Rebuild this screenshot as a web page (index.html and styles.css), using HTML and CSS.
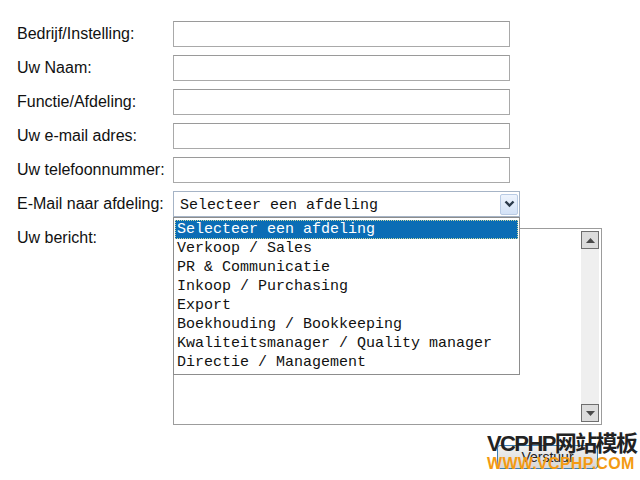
FILE: index.html
```html
<!DOCTYPE html>
<html lang="nl">
  <head>
    <meta charset="UTF-8" />
    <title>Contact</title>
    <link rel="stylesheet" href="styles.css">
  </head>
  <body>
    <form class="contact">
      <label class="lbl">Bedrijf/Instelling:</label>
      <input class="field" type="text" />
      <label class="lbl">Uw Naam:</label>
      <input class="field" type="text" />
      <label class="lbl">Functie/Afdeling:</label>
      <input class="field" type="text" />
      <label class="lbl">Uw e-mail adres:</label>
      <input class="field" type="text" />
      <label class="lbl">Uw telefoonnummer:</label>
      <input class="field" type="text" />
      <label class="lbl">E-Mail naar afdeling:</label>
      <div class="select">
        <span class="select-value">Selecteer een afdeling</span>
        <span class="select-arrow">
          <svg width="11" height="8" viewBox="0 0 11 8"><path d="M1.5 1.5 L5.5 5.5 L9.5 1.5" fill="none" stroke="#2b3a4a" stroke-width="2.4"/></svg>
        </span>
        <ul class="options">
          <li class="active">Selecteer een afdeling</li>
          <li>Verkoop / Sales</li>
          <li>PR &amp; Communicatie</li>
          <li>Inkoop / Purchasing</li>
          <li>Export</li>
          <li>Boekhouding / Bookkeeping</li>
          <li>Kwaliteitsmanager / Quality manager</li>
          <li>Directie / Management</li>
        </ul>
      </div>
      <label class="lbl lbl-top">Uw bericht:</label>
      <div class="message">
        <div class="message-text"></div>
        <div class="scrollbar">
          <span class="sb-btn">
            <svg width="9" height="5" viewBox="0 0 9 5"><path d="M0 5 L4.5 0 L9 5 Z" fill="#4a4a4a"/></svg>
          </span>
          <span class="sb-track"></span>
          <span class="sb-btn">
            <svg width="9" height="5" viewBox="0 0 9 5"><path d="M0 0 L4.5 5 L9 0 Z" fill="#4a4a4a"/></svg>
          </span>
        </div>
      </div>
      <span></span>
      <div class="actions">
        <button class="send" type="button">Verstuur</button>
        <div class="mark">
          <div class="mark-top">VCPHP网站模板</div>
          <div class="mark-url">WWW.VCPHP.COM</div>
        </div>
      </div>
    </form>
  </body>
</html>
```

FILE: styles.css
```css
body {
  margin: 0;
  padding: 21px 0 0 17px;
  background: #fff;
  font-family: "Liberation Sans", Arial, sans-serif;
  font-size: 16px;
  color: #111;
}

.contact {
  display: grid;
  grid-template-columns: 156px auto;
  row-gap: 8px;
  align-items: center;
  justify-items: start;
}

.lbl {
  line-height: 20px;
  white-space: nowrap;
}

.lbl-top {
  align-self: start;
  margin-top: 3px;
}

.field {
  box-sizing: border-box;
  width: 337px;
  height: 26px;
  margin: 0;
  border: 1px solid #a9a9a9;
  border-top-color: #9a9a9a;
  background: #fff;
}

.select {
  position: relative;
  box-sizing: border-box;
  width: 347px;
  height: 26px;
  border: 1px solid #a6b4c6;
  display: flex;
  align-items: center;
  justify-content: space-between;
  padding: 0 1px 0 6px;
  font-family: "Liberation Mono", "Courier New", monospace;
  font-size: 15px;
  z-index: 2;
}

.select-value {
  padding-top: 2px;
}

.select-arrow {
  width: 18px;
  height: 21px;
  box-sizing: border-box;
  border: 1px solid #b9cbe4;
  border-radius: 2px;
  background: linear-gradient(#eef4fd, #d3e2f7);
  display: flex;
  align-items: center;
  justify-content: center;
}

.options {
  position: absolute;
  left: -1px;
  top: 25px;
  width: 347px;
  box-sizing: border-box;
  margin: 0;
  padding: 2px 1px 2px;
  list-style: none;
  background: #fff;
  border: 1px solid #8d8d8d;
}

.options li {
  height: 19px;
  line-height: 20px;
  padding-left: 2px;
  white-space: nowrap;
}

.options li.active {
  background: #0b6db5;
  color: #fff;
  outline: 1px dotted #c9d9a0;
  outline-offset: -1px;
}

.message {
  box-sizing: border-box;
  width: 429px;
  height: 197px;
  margin-top: 3px;
  border: 1px solid #9c9c9c;
  display: flex;
}

.message-text {
  flex: 1;
}

.scrollbar {
  width: 18px;
  margin: 2px 2px 2px 0;
  display: flex;
  flex-direction: column;
  background: #efefef;
}

.sb-btn {
  height: 18px;
  box-sizing: border-box;
  border: 1px solid #6e6e6e;
  background: #dcdcdc;
  display: flex;
  align-items: center;
  justify-content: center;
}

.sb-track {
  flex: 1;
}

.actions {
  position: relative;
  justify-self: end;
  margin: 3px 0 0;
  width: 160px;
  height: 44px;
}

.send {
  position: absolute;
  left: 17px;
  top: 9px;
  width: 101px;
  height: 24px;
  border: 1px solid #3c7fb1;
  border-radius: 3px;
  background: linear-gradient(#f2f2f2, #d6d6d6);
  font-family: "Liberation Sans", Arial, sans-serif;
  font-size: 14px;
  color: #222;
}

.mark {
  position: absolute;
  left: 7px;
  top: -3px;
  font-family: "Liberation Sans", "Noto Sans CJK SC", sans-serif;
  font-weight: bold;
  line-height: 1;
}

.mark-top {
  font-size: 22px;
  color: #222;
  letter-spacing: -1.6px;
}

.mark-url {
  margin-top: 1px;
  font-size: 16px;
  color: #f39a12;
  letter-spacing: 0.3px;
}
```
